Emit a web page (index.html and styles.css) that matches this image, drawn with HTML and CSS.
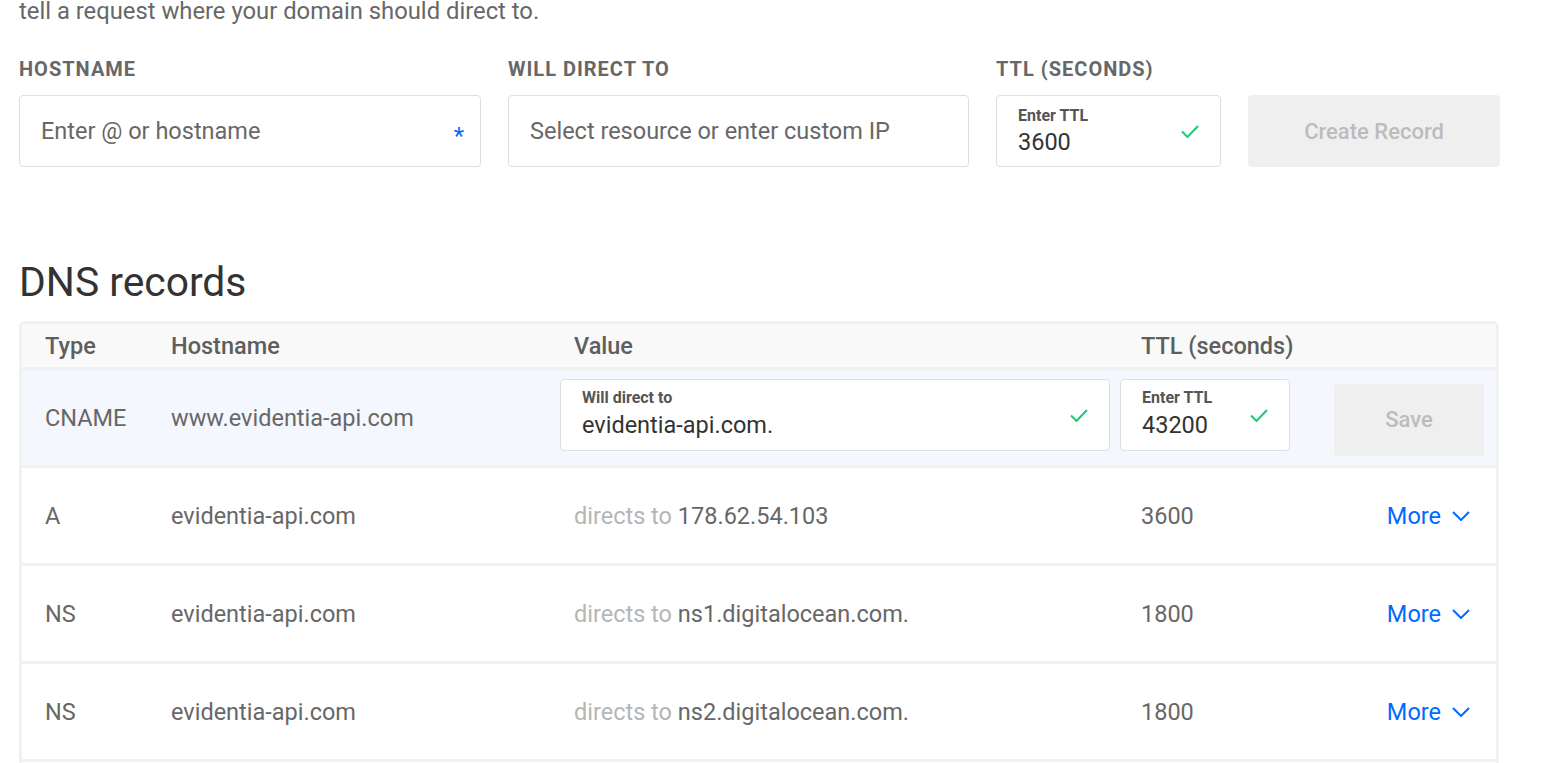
FILE: index.html
```html
<!DOCTYPE html>
<html lang="en">
<head>
<meta charset="utf-8">
<title>DNS records</title>
<link rel="stylesheet" href="styles.css">
</head>
<body>
<main class="page">
  <p class="intro">tell a request where your domain should direct to.</p>

  <form class="create-form">
    <label class="field-label">Hostname</label>
    <label class="field-label">Will direct to</label>
    <label class="field-label">TTL (seconds)</label>
    <span></span>

    <div class="text-input">
      <input type="text" placeholder="Enter @ or hostname">
      <span class="req">*</span>
    </div>
    <div class="text-input">
      <input type="text" placeholder="Select resource or enter custom IP">
    </div>
    <div class="float-input top-ttl">
      <div class="float-body">
        <label>Enter TTL</label>
        <input type="text" value="3600">
      </div>
      <svg class="check" viewBox="0 0 18 13"><path d="M1 6.5 L6.5 12 L17 1" fill="none" stroke="#15cd72" stroke-width="2"/></svg>
    </div>
    <button type="button" class="btn-disabled" disabled>Create Record</button>
  </form>

  <h2 class="section-title">DNS records</h2>

  <div class="records">
    <div class="rec-row rec-head">
      <span>Type</span>
      <span>Hostname</span>
      <span>Value</span>
      <span>TTL (seconds)</span>
      <span></span>
    </div>

    <div class="rec-row rec-edit">
      <span>CNAME</span>
      <span>www.evidentia-api.com</span>
      <div class="float-input value-input">
        <div class="float-body">
          <label>Will direct to</label>
          <input type="text" value="evidentia-api.com.">
        </div>
        <svg class="check" viewBox="0 0 18 13"><path d="M1 6.5 L6.5 12 L17 1" fill="none" stroke="#15cd72" stroke-width="2"/></svg>
      </div>
      <div class="float-input ttl-input">
        <div class="float-body">
          <label>Enter TTL</label>
          <input type="text" value="43200">
        </div>
        <svg class="check" viewBox="0 0 18 13"><path d="M1 6.5 L6.5 12 L17 1" fill="none" stroke="#15cd72" stroke-width="2"/></svg>
      </div>
      <button type="button" class="btn-disabled btn-save" disabled>Save</button>
    </div>

    <div class="rec-row">
      <span>A</span>
      <span>evidentia-api.com</span>
      <span><span class="muted">directs to</span> 178.62.54.103</span>
      <span>3600</span>
      <a class="more" href="#">More <svg class="chev" viewBox="0 0 18 10"><path d="M1 1 L9 9 L17 1" fill="none" stroke="#0069ff" stroke-width="2"/></svg></a>
    </div>

    <div class="rec-row">
      <span>NS</span>
      <span>evidentia-api.com</span>
      <span><span class="muted">directs to</span> ns1.digitalocean.com.</span>
      <span>1800</span>
      <a class="more" href="#">More <svg class="chev" viewBox="0 0 18 10"><path d="M1 1 L9 9 L17 1" fill="none" stroke="#0069ff" stroke-width="2"/></svg></a>
    </div>

    <div class="rec-row">
      <span>NS</span>
      <span>evidentia-api.com</span>
      <span><span class="muted">directs to</span> ns2.digitalocean.com.</span>
      <span>1800</span>
      <a class="more" href="#">More <svg class="chev" viewBox="0 0 18 10"><path d="M1 1 L9 9 L17 1" fill="none" stroke="#0069ff" stroke-width="2"/></svg></a>
    </div>
  </div>
</main>
</body>
</html>
```

FILE: styles.css
```css
* {
  box-sizing: border-box;
}

html, body {
  margin: 0;
  background: #fff;
}

body {
  font-family: Roboto, "Liberation Sans", sans-serif;
  color: #676767;
  overflow: hidden;
}

.page {
  width: 1554px;
  padding-left: 19px;
}

.intro {
  margin: -3px 0 0;
  font-size: 23.8px;
  line-height: 28px;
  color: #676767;
}

/* ---------- create form ---------- */
.create-form {
  display: grid;
  grid-template-columns: 462px 461px 225px 252px;
  column-gap: 27px;
  row-gap: 16px;
  margin: 34px 0 0;
}

.field-label {
  font-size: 20px;
  line-height: 20px;
  font-weight: 700;
  letter-spacing: 1px;
  text-transform: uppercase;
  color: #676767;
}

.text-input {
  height: 72px;
  border: 1px solid #dfdfdf;
  border-radius: 4px;
  background: #fff;
  display: flex;
  align-items: center;
  padding: 0 16px 0 21px;
}

.text-input input {
  flex: 1;
  min-width: 0;
  border: 0;
  outline: 0;
  padding: 0;
  background: transparent;
  font-family: inherit;
  font-size: 23.5px;
  color: #333;
}

.text-input input::placeholder {
  color: #676767;
  opacity: 1;
}

.req {
  color: #0069ff;
  font-size: 24px;
  line-height: 1;
  margin-top: 9px;
}

.float-input {
  height: 72px;
  border: 1px solid #dfdfdf;
  border-radius: 4px;
  background: #fff;
  display: flex;
  align-items: center;
  padding: 0 21px 0 21px;
}

.float-body {
  flex: 1;
  min-width: 0;
  align-self: flex-start;
  padding-top: 10px;
  display: flex;
  flex-direction: column;
}

.float-body label {
  font-size: 16px;
  line-height: 16px;
  font-weight: 700;
  color: #555;
  margin-bottom: 6px;
}

.top-ttl .float-body {
  padding-top: 12px;
}

.top-ttl .float-body label {
  margin-bottom: 5px;
}

.float-body input {
  height: 26px;
  border: 0;
  outline: 0;
  padding: 0;
  background: transparent;
  font-family: inherit;
  font-size: 23.5px;
  line-height: 26px;
  color: #333;
}

.check {
  width: 18px;
  height: 13px;
  flex: none;
}

.btn-disabled {
  height: 72px;
  border: 0;
  border-radius: 4px;
  background: #efefef;
  color: #bcbcbc;
  font-family: inherit;
  font-weight: 500;
  font-size: 22px;
  padding: 0;
}

/* ---------- records table ---------- */
.section-title {
  margin: 91px 0 0;
  font-size: 40.8px;
  line-height: 48px;
  font-weight: 400;
  color: #333;
}

.records {
  width: 1480px;
  margin-top: 15px;
  padding-bottom: 20px;
  border: 3px solid #f1f1f1;
  border-bottom: 0;
  border-radius: 6px 6px 0 0;
}

.rec-row {
  display: grid;
  grid-template-columns: 126px 403px 567px 160px 1fr;
  align-items: center;
  height: 98px;
  padding: 0 26px 0 23px;
  border-bottom: 3px solid #f1f1f1;
  font-size: 23.5px;
  color: #676767;
  white-space: nowrap;
}

.rec-head {
  height: 46px;
  background: #f9f9f9;
  font-weight: 500;
  color: #5e5e5e;
}

.rec-edit {
  background: #f4f7fd;
}

.value-input {
  width: 550px;
  margin: 0 0 5px -14px;
}

.ttl-input {
  width: 170px;
  margin: 0 0 5px -21px;
}

.btn-save {
  width: 150px;
  justify-self: end;
  margin: 4px -14px 0 0;
}

.muted {
  color: #b5b5b5;
}

.more {
  justify-self: end;
  display: flex;
  align-items: center;
  gap: 11px;
  color: #0069ff;
  text-decoration: none;
}

.chev {
  width: 18px;
  height: 10px;
}
```
